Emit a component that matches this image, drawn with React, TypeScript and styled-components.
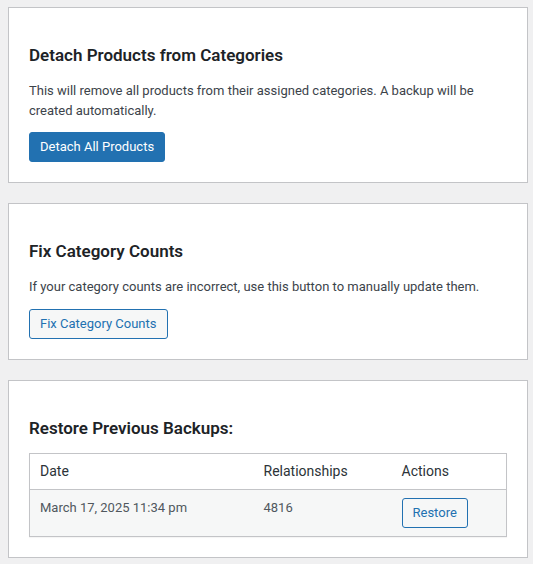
import styled, { createGlobalStyle } from "styled-components";

const GlobalStyle = createGlobalStyle`
  body {
    margin: 0;
    background: #f0f0f1;
    font-family: Roboto, "Noto Sans", sans-serif;
    font-size: 13px;
    color: #3c434a;
  }
`;

const Page = styled.div`
  display: flex;
  flex-direction: column;
  gap: 20px;
  padding: 7px 6px 0 8px;
`;

const Card = styled.section`
  width: 520px;
  box-sizing: border-box;
  background: #fff;
  border: 1px solid #c3c4c7;
  padding: 35px 20px 20px;
`;

const Title = styled.h2`
  margin: 0 0 13px;
  font-size: 17px;
  font-weight: 600;
  line-height: 24px;
  color: #1d2327;
`;

const Text = styled.p`
  margin: 0 0 12px;
  padding-top: 1px;
  font-size: 13px;
  line-height: 19.5px;
  color: #3c434a;
`;

const Button = styled.button<{ $primary?: boolean }>`
  display: inline-block;
  vertical-align: top;
  box-sizing: border-box;
  height: 30px;
  padding: 0 10px;
  font-family: inherit;
  font-size: 13px;
  line-height: 28px;
  border-radius: 3px;
  border: 1px solid #2271b1;
  background: ${({ $primary }) => ($primary ? "#2271b1" : "#f6f7f7")};
  color: ${({ $primary }) => ($primary ? "#fff" : "#2271b1")};
  cursor: pointer;
`;

const Table = styled.table`
  width: 100%;
  border-collapse: collapse;
  border: 1px solid #c3c4c7;
  box-shadow: 0 1px 1px rgba(0, 0, 0, 0.04);
  table-layout: fixed;
`;

const Th = styled.th<{ $w?: number }>`
  box-sizing: border-box;
  width: ${({ $w }) => ($w ? `${$w}px` : "auto")};
  text-align: left;
  font-weight: 400;
  font-size: 14px;
  line-height: 19px;
  color: #2c3338;
  padding: 8px 10px;
  border-bottom: 1px solid #c3c4c7;
`;

const Td = styled.td`
  vertical-align: top;
  font-size: 13px;
  line-height: 19.5px;
  color: #50575e;
  padding: 8px 10px;
  background: #f6f7f7;
`;

const backups = [{ date: "March 17, 2025 11:34 pm", count: 4816 }];

export default function App() {
  return (
    <Page>
      <GlobalStyle />
      <Card>
        <Title>Detach Products from Categories</Title>
        <Text>
          This will remove all products from their assigned categories. A backup will be
          created automatically.
        </Text>
        <Button $primary>Detach All Products</Button>
      </Card>
      <Card>
        <Title>Fix Category Counts</Title>
        <Text>If your category counts are incorrect, use this button to manually update them.</Text>
        <Button>Fix Category Counts</Button>
      </Card>
      <Card>
        <Title>Restore Previous Backups:</Title>
        <Table>
          <thead>
            <tr>
              <Th $w={224}>Date</Th>
              <Th $w={138}>Relationships</Th>
              <Th>Actions</Th>
            </tr>
          </thead>
          <tbody>
            {backups.map((b) => (
              <tr key={b.date}>
                <Td>{b.date}</Td>
                <Td>{b.count}</Td>
                <Td>
                  <Button>Restore</Button>
                </Td>
              </tr>
            ))}
          </tbody>
        </Table>
      </Card>
    </Page>
  );
}
